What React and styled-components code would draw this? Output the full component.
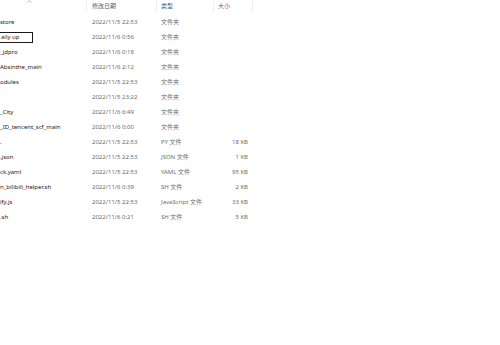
import React from 'react';
import styled, { createGlobalStyle } from 'styled-components';

const GlobalStyle = createGlobalStyle`
  html, body {
    margin: 0;
    padding: 0;
    background: #ffffff;
  }
  body {
    font-family: "Noto Sans", "Noto Sans CJK SC", sans-serif;
  }
`;

const Page = styled.div`
  width: 500px;
  height: 345px;
  background: #fff;
  overflow: hidden;
`;

const Grid = styled.div`
  display: grid;
  grid-template-columns: 87px 70px 57px 39px;
`;

const HeaderRow = styled.div`
  display: contents;
`;

const HeadCell = styled.div`
  height: 12px;
  line-height: 12px;
  font-size: 6px;
  color: #4d6082;
  padding-left: ${(p) => p.$pad || 4}px;
  border-right: 1px solid #eceff3;
  position: relative;
`;

const Caret = styled.svg`
  position: absolute;
  left: 27px;
  top: 0;
  width: 5px;
  height: 3px;
`;

const Row = styled.div`
  display: contents;
`;

const Cell = styled.div`
  height: 15px;
  line-height: 15px;
  font-size: 6px;
  white-space: nowrap;
  overflow: hidden;
  color: ${(p) => p.$color || '#6d6d6d'};
  padding-left: ${(p) => p.$pad || 0}px;
  padding-right: ${(p) => p.$padR || 0}px;
  text-align: ${(p) => p.$align || 'left'};
  margin-top: ${(p) => (p.$first ? 3 : 0)}px;
`;

const NameText = styled.span`
  display: inline-block;
  line-height: 9px;
  ${(p) =>
    p.$editing &&
    `
    border: 1px solid #1a1a1a;
    margin-left: -1px;
    padding: 0 0 0 1px;
    width: 34px;
    box-sizing: border-box;
  `}
`;

const files = [
  { name: 'store', date: '2022/11/5 22:53', type: '文件夹', size: '' },
  { name: 'aily up', date: '2022/11/6 0:56', type: '文件夹', size: '', editing: true },
  { name: '_jdpro', date: '2022/11/6 0:18', type: '文件夹', size: '' },
  { name: 'Absinthe_main', date: '2022/11/6 2:12', type: '文件夹', size: '' },
  { name: 'odules', date: '2022/11/5 22:53', type: '文件夹', size: '' },
  { name: '', date: '2022/11/5 23:22', type: '文件夹', size: '' },
  { name: '_City', date: '2022/11/6 6:49', type: '文件夹', size: '' },
  { name: '_ID_tencent_scf_main', date: '2022/11/6 0:00', type: '文件夹', size: '' },
  { name: '.', date: '2022/11/5 22:53', type: 'PY 文件', size: '18 KB' },
  { name: '.json', date: '2022/11/5 22:53', type: 'JSON 文件', size: '1 KB' },
  { name: 'ck.yaml', date: '2022/11/5 22:53', type: 'YAML 文件', size: '95 KB' },
  { name: 'n_bilibili_helper.sh', date: '2022/11/6 0:39', type: 'SH 文件', size: '2 KB' },
  { name: 'ify.js', date: '2022/11/5 22:53', type: 'JavaScript 文件', size: '33 KB' },
  { name: '.sh', date: '2022/11/6 0:21', type: 'SH 文件', size: '5 KB' },
];

export default function App() {
  return (
    <Page>
      <GlobalStyle />
      <Grid>
        <HeaderRow>
          <HeadCell>
            <Caret viewBox="0 0 5 3">
              <path d="M0.5 2.5 L2.5 0.5 L4.5 2.5" fill="none" stroke="#9a9a9a" strokeWidth="0.7" />
            </Caret>
          </HeadCell>
          <HeadCell $pad={5}>修改日期</HeadCell>
          <HeadCell $pad={4}>类型</HeadCell>
          <HeadCell $pad={4}>大小</HeadCell>
        </HeaderRow>
        {files.map((f, i) => (
          <Row key={i}>
            <Cell $color="#1a1a1a" $first={i === 0}>
              <NameText $editing={f.editing}>{f.name}</NameText>
            </Cell>
            <Cell $pad={5} $first={i === 0}>{f.date}</Cell>
            <Cell $pad={4} $first={i === 0}>{f.type}</Cell>
            <Cell $align="right" $padR={5} $first={i === 0}>{f.size}</Cell>
          </Row>
        ))}
      </Grid>
    </Page>
  );
}
